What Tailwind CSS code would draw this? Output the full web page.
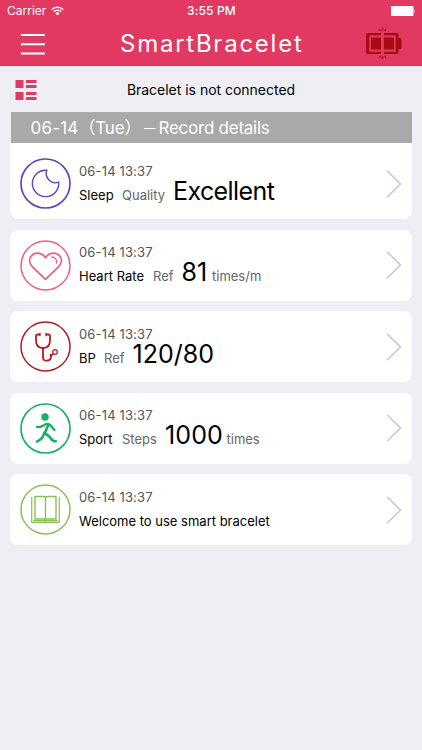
<!DOCTYPE html>
<html lang="en">
<head>
  <meta charset="UTF-8" />
  <meta name="viewport" content="width=device-width, initial-scale=1.0" />
  <title>SmartBracelet</title>
  <script src="https://cdn.jsdelivr.net/npm/@tailwindcss/browser@4"></script>
</head>
<body class="bg-[#efeef5] min-h-screen overflow-hidden font-['Inter','Noto_Sans_CJK_SC',sans-serif] text-black">

  <!-- Header -->
  <header class="h-[66px] bg-[#e13962] border-b border-[#d2365b] text-white">
    <div class="h-[22px] grid grid-cols-3 items-center pl-[7px] pr-[6px] text-xs leading-[22px]">
      <div class="flex items-center gap-[5px]">
        <span>Carrier</span>
        <svg class="w-[13px] h-[10px]" viewBox="0 0 13 10" fill="none" stroke="white" stroke-width="1.5">
          <path d="M0.7 3.7a8.2 8.2 0 0 1 11.6 0M2.8 5.8a5.2 5.2 0 0 1 7.4 0" />
          <path d="M6.5 9.5L4.4 7.3a3 3 0 0 1 4.2 0z" fill="white" stroke="none" />
        </svg>
      </div>
      <span class="text-center font-medium whitespace-nowrap tracking-[0.15px]">3:55 PM</span>
      <svg class="w-[25px] h-[10px] justify-self-end" viewBox="0 0 25 10" fill="white">
        <rect width="22.5" height="10" rx="1" />
        <path d="M23.3 3.2q1.5 1.8 0 3.6z" />
      </svg>
    </div>
    <div class="h-11 flex items-center justify-between pl-[21px] pr-5">
      <svg class="w-6 h-[21px]" viewBox="0 0 24 21" fill="white">
        <path d="M0 0h24v2H0zM0 9.300h24v2H0zM0 18.600h24v2H0z" />
      </svg>
      <h1 class="w-[184px] ml-[13px] text-[24px] leading-none tracking-[1.75px] whitespace-nowrap">SmartBracelet</h1>
      <svg class="w-9 h-8" viewBox="0 0 36 32" fill="#a50d12">
        <path d="M1.500 5H15v2.300H3.300v16.400H15V26H1.500a1.500 1.500 0 0 1-1.500-1.500v-18A1.500 1.500 0 0 1 1.500 5z" />
        <path d="M18 5h13a1.500 1.500 0 0 1 1.500 1.500V10H34a1.500 1.500 0 0 1 1.500 1.500v8A1.500 1.500 0 0 1 34 21h-1.500v3.500A1.500 1.500 0 0 1 31 26H18v-2.300h11.700V7.300H18z" />
        <path d="M5 9.500h10v12H5zM18 9.500h10v12H18z" />
        <path d="M15.800 0h1.400v3h-1.400zM12.500 1.500l1-.8 1.500 2-1 .8zM19.500.7l1 .8-1.500 2-1-.8zM15.800 28h1.400v3h-1.400zM14 27.500l1 .8-1.500 2-1-.8zM19 27.500l1.500 2-1 .8-1.500-2z" />
      </svg>
    </div>
  </header>

  <!-- Connection status -->
  <div class="h-[46px] relative flex items-center justify-center">
    <svg class="absolute left-[15px] top-[14px] w-[22px] h-[20px]" viewBox="0 0 22 20" fill="#e13962">
      <path d="M0.500 0h8v8h-8zM11 0h10.500v3H11zM11 5h10.500v3H11zM0.500 12h8v8h-8zM11 12h10.500v3H11zM11 17h10.500v3H11z" />
    </svg>
    <p class="pt-px text-sm tracking-[-0.02px] whitespace-nowrap">Bracelet is not connected</p>
  </div>

  <main class="px-[10.500px]">
    <div class="h-[31px] flex items-center bg-[#a9a9a9] pl-5 pt-[2px] text-white text-[17px] whitespace-nowrap">
      <span class="w-[48px] tracking-[0.2px]">06-14</span>
      <span class="w-[65px] tracking-[-0.2px]">（Tue）</span>
      <span class="w-[12px] h-px bg-white mr-[3px]"></span>
      <span class="tracking-[-0.25px]">Record details</span>
    </div>

    <ul class="space-y-[10.500px] -ml-[0.5px]">
      <li class="h-[76px] pt-[5px] bg-white rounded-b-lg flex items-center pl-[10px] pr-[9.500px]">
        <svg class="w-[51px] h-[51px] shrink-0" viewBox="0 0 51 51" fill="none" stroke="#6544b5">
          <circle cx="25.500" cy="25.500" r="24.500" stroke-width="1.700" />
          <path d="M26.800 12.300A13.200 13.200 0 1 0 38.700 24.200A9.300 9.300 0 0 1 26.800 12.300z" stroke-width="1.400" />
        </svg>
        <div class="ml-2 flex-1 whitespace-nowrap text-[13px]">
          <p class="h-[22px] leading-[22px] text-[#555] tracking-[0.15px]">06-14 13:37</p>
          <p class="h-[26px] leading-[26px] flex items-baseline">
            <span class="w-[43px]">Sleep</span>
            <span class="w-[51px] text-[#666]">Quality</span>
            <span class="text-[25px] leading-[18px] tracking-[-0.6px]">Excellent</span>
          </p>
        </div>
        <svg class="w-4 h-7" viewBox="0 0 16 28" fill="none" stroke="#c7c7cc" stroke-width="1.500"><path d="M1 .8L14.500 14 1 27.200" /></svg>
      </li>

      <li class="h-[71px] bg-white rounded-lg flex items-center pl-[10px] pr-[9.500px]">
        <svg class="w-[51px] h-[51px] shrink-0" viewBox="0 0 51 51" fill="none" stroke="#ee5f88">
          <circle cx="25.500" cy="25.500" r="24.500" stroke-width="1.500" />
          <path d="M25.500 39.300L13 27.300C9.500 24 8.500 19.500 11.300 16C15 11.800 22.500 12.300 25.500 17.800C28.500 12.300 36 11.800 39.700 16C42.500 19.500 41.500 24 38 27.300z" stroke-width="1.800" stroke-linejoin="round" />
          <path d="M31.800 17c3.200 0 5.300 2.500 4.800 6" stroke-width="1.300" stroke-linecap="round" />
        </svg>
        <div class="ml-2 flex-1 whitespace-nowrap text-[13px]">
          <p class="h-[22px] leading-[22px] text-[#555] tracking-[0.15px]">06-14 13:37</p>
          <p class="h-[26px] leading-[26px] flex items-baseline">
            <span class="w-[74px]">Heart Rate</span>
            <span class="w-[28.500px] text-[#666]">Ref</span>
            <span class="w-[30.500px] text-[25px] leading-[18px]">81</span>
            <span class="text-[#666]">times/m</span>
          </p>
        </div>
        <svg class="w-4 h-7" viewBox="0 0 16 28" fill="none" stroke="#c7c7cc" stroke-width="1.500"><path d="M1 .8L14.500 14 1 27.200" /></svg>
      </li>

      <li class="h-[71px] bg-white rounded-lg flex items-center pl-[10px] pr-[9.500px]">
        <svg class="w-[51px] h-[51px] shrink-0" viewBox="0 0 51 51" fill="none" stroke="#b51c1f">
          <circle cx="25.500" cy="25.500" r="24.500" stroke-width="1.500" />
          <path d="M20 13.500h-2.500q-1.500 0-1.500 1.500v4.500c0 4.500 2.500 7.500 7 7.500s7-3 7-7.500V15q0-1.500-1.500-1.500H26" stroke-width="1.800" />
          <path d="M23 27v9.500c0 2 1.200 3.200 3.500 3.200s4.300-1.300 4.300-3.700V33" stroke-width="1.800" />
          <circle cx="35" cy="31" r="2.300" stroke-width="1.200" />
          <path d="M33.500 33q-2.500.5-2.700 3.500M20 11.800v3.400M26 11.800v3.400" stroke-width="1.300" />
        </svg>
        <div class="ml-2 flex-1 whitespace-nowrap text-[13px]">
          <p class="h-[22px] leading-[22px] text-[#555] tracking-[0.15px]">06-14 13:37</p>
          <p class="h-[26px] leading-[26px] flex items-baseline">
            <span class="w-[25px]">BP</span>
            <span class="w-[28.500px] text-[#666]">Ref</span>
            <span class="text-[25px] leading-[18px]">120/80</span>
          </p>
        </div>
        <svg class="w-4 h-7" viewBox="0 0 16 28" fill="none" stroke="#c7c7cc" stroke-width="1.500"><path d="M1 .8L14.500 14 1 27.200" /></svg>
      </li>

      <li class="h-[71px] bg-white rounded-lg flex items-center pl-[10px] pr-[9.500px]">
        <svg class="w-[51px] h-[51px] shrink-0" viewBox="0 0 51 51" fill="none" stroke="#19b063">
          <circle cx="25.500" cy="25.500" r="24.500" stroke-width="1.700" />
          <circle cx="25" cy="14" r="3.700" fill="#19b063" stroke="none" />
          <path d="M17 23.800c2.500.5 4.500 0 6.500-1.500s4.500-2 6.500-.5 2.500 3.500 4.500 5" stroke-width="2.300" stroke-linecap="round" />
          <path d="M28 22.500l-3.200 7.800c3.200 2 4.500 2.500 6 5 1 2 2.500 3 5 3M24.500 29.500c-1 4-3.500 7.500-7.500 9" stroke-width="2.600" stroke-linecap="round" stroke-linejoin="round" />
        </svg>
        <div class="ml-2 flex-1 whitespace-nowrap text-[13px]">
          <p class="h-[22px] leading-[22px] text-[#555] tracking-[0.15px]">06-14 13:37</p>
          <p class="h-[26px] leading-[26px] flex items-baseline">
            <span class="w-[43px]">Sport</span>
            <span class="w-[43px] text-[#666]">Steps</span>
            <span class="w-[61.500px] text-[25px] leading-[18px] tracking-[0.1px]">1000</span>
            <span class="text-[#666]">times</span>
          </p>
        </div>
        <svg class="w-4 h-7" viewBox="0 0 16 28" fill="none" stroke="#c7c7cc" stroke-width="1.500"><path d="M1 .8L14.500 14 1 27.200" /></svg>
      </li>

      <li class="h-[71px] bg-white rounded-lg flex items-center pl-[10px] pr-[9.500px]">
        <svg class="w-[51px] h-[51px] shrink-0" viewBox="0 0 51 51" fill="none" stroke="#8bc057">
          <circle cx="25.500" cy="25.500" r="24.500" stroke-width="1.500" />
          <path d="M15 12.500h8.500q2 0 2 1.500 0-1.500 2-1.500H36v22.500H15zM25.500 14v24" stroke-width="1.400" />
          <path d="M11.700 13v25.300h27.600V13M13.300 36.700h24.400" stroke-width="1.200" />
        </svg>
        <div class="ml-2 flex-1 whitespace-nowrap text-[13px]">
          <p class="h-[22px] leading-[22px] text-[#555] tracking-[0.15px]">06-14 13:37</p>
          <p class="h-[26px] leading-[26px] flex items-baseline">
            <span>Welcome to use smart bracelet</span>
          </p>
        </div>
        <svg class="w-4 h-7" viewBox="0 0 16 28" fill="none" stroke="#c7c7cc" stroke-width="1.500"><path d="M1 .8L14.500 14 1 27.200" /></svg>
      </li>
    </ul>
  </main>

</body>
</html>
